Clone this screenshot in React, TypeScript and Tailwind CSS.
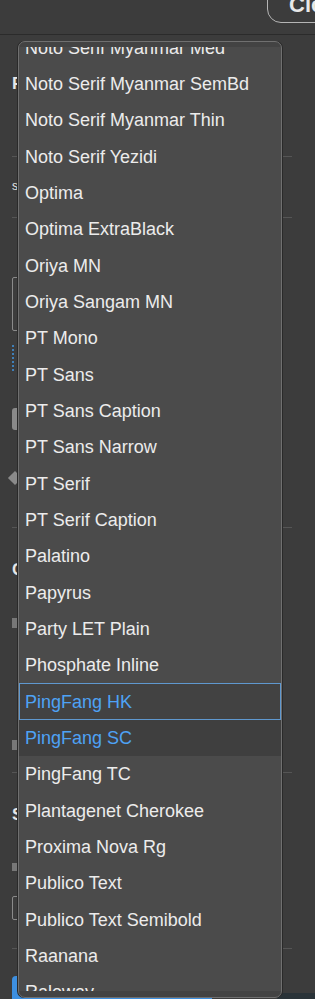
import React from 'react';

const fonts = [
  'Noto Serif Myanmar Med',
  'Noto Serif Myanmar SemBd',
  'Noto Serif Myanmar Thin',
  'Noto Serif Yezidi',
  'Optima',
  'Optima ExtraBlack',
  'Oriya MN',
  'Oriya Sangam MN',
  'PT Mono',
  'PT Sans',
  'PT Sans Caption',
  'PT Sans Narrow',
  'PT Serif',
  'PT Serif Caption',
  'Palatino',
  'Papyrus',
  'Party LET Plain',
  'Phosphate Inline',
  'PingFang HK',
  'PingFang SC',
  'PingFang TC',
  'Plantagenet Cherokee',
  'Proxima Nova Rg',
  'Publico Text',
  'Publico Text Semibold',
  'Raanana',
  'Raleway',
];

const HOVERED = 'PingFang HK';
const SELECTED = 'PingFang SC';

function FontRow({ name }: { name: string }) {
  if (name === HOVERED) {
    return (
      <div className="h-[36.33px] flex items-center pl-[5px] border border-[#5f98cf] bg-[#424242] text-[#4ea2f5]">
        {name}
      </div>
    );
  }
  if (name === SELECTED) {
    return (
      <div className="h-[36.33px] flex items-center pl-[6px] bg-[#3f3f3f] text-[#4ea2f5]">{name}</div>
    );
  }
  return <div className="h-[36.33px] flex items-center pl-[6px] text-[#ececec]">{name}</div>;
}

function Divider() {
  return <div className="h-px bg-[#555555]" />;
}

export default function App() {
  return (
    <div
      className="relative w-[315px] h-[999px] overflow-hidden bg-[#3c3c3c] text-[#e6e6e6]"
      style={{ fontFamily: '"Liberation Sans", Arial, sans-serif' }}
    >
      {/* panel behind the popup */}
      <div className="flex items-start justify-end h-[35px] border-b border-[#2b2b2b]">
        <button className="mt-[-20px] mr-[-55px] h-[43px] pl-[21px] pr-5 pt-[6px] rounded-[14px] border-[1.5px] border-[#b5b5b5] text-[22px] leading-[22px] font-bold text-[#e8e8e8] text-left">
          Close
        </button>
      </div>
      <div className="flex flex-col items-start pl-[12px] pr-[23px]">
        <div className="h-[37px]" />
        <div className="h-[24px] text-[17px] font-bold leading-[24px]">Font</div>
        <div className="h-[60px]" />
        <div className="self-stretch"><Divider /></div>
        <div className="h-[22px]" />
        <div className="h-[14px] text-[12px] leading-[14px]">size</div>
        <div className="h-[24px]" />
        <div className="self-stretch"><Divider /></div>
        <div className="h-[59px]" />
        <div className="h-[54px] w-[200px] border border-[#8a8a8a] rounded-[2px]" />
        <div className="h-[14px]" />
        <div className="h-[26px] border-l-2 border-dotted border-[#3f7fb8]" />
        <div className="h-[37px]" />
        <div className="h-[22px] w-[10px] rounded-[3px] bg-[#8a8a8a]" />
        <div className="h-[43px]" />
        <div className="h-[10px] w-[10px] rotate-45 bg-[#8a8a8a] ml-[-2px]" />
        <div className="h-[44px]" />
        <div className="self-stretch"><Divider /></div>
        <div className="h-[30px]" />
        <div className="h-[24px] text-[17px] font-bold leading-[24px]">Color</div>
        <div className="h-[36px]" />
        <div className="h-[10px] w-[6px] bg-[#777777]" />
        <div className="h-[112px]" />
        <div className="h-[10px] w-[6px] bg-[#777777]" />
        <div className="h-[22px]" />
        <div className="self-stretch"><Divider /></div>
        <div className="h-[30px]" />
        <div className="h-[24px] text-[17px] font-bold leading-[24px]">Stroke</div>
        <div className="h-[36px]" />
        <div className="h-[8px] w-[6px] bg-[#777777]" />
        <div className="h-[25px]" />
        <div className="h-[24px] w-[200px] border border-[#8a8a8a] rounded-[2px]" />
        <div className="h-[28px]" />
        <div className="self-stretch"><Divider /></div>
        <div className="h-[27px]" />
        <div className="h-[40px] w-[200px] rounded-[4px] bg-[#3d8fe0]" />
      </div>
      <div className="absolute right-0 bottom-0 w-[38px] h-[6px] bg-[#2a3338]" />

      {/* font popup menu */}
      <div className="absolute left-[18px] top-[41px] w-[264px] h-[957px] rounded-[7px] border border-[#707070] bg-[#434343] pt-[5px] pb-[6px] shadow-[1px_0_0_#2a2a2a,-1px_0_0_#2a2a2a]">
        <div className="h-full overflow-hidden bg-[#4b4b4b] text-[18px] leading-none">
          <div className="mt-[-17.5px]">
            {fonts.map((f) => (
              <FontRow key={f} name={f} />
            ))}
          </div>
        </div>
      </div>
    </div>
  );
}
